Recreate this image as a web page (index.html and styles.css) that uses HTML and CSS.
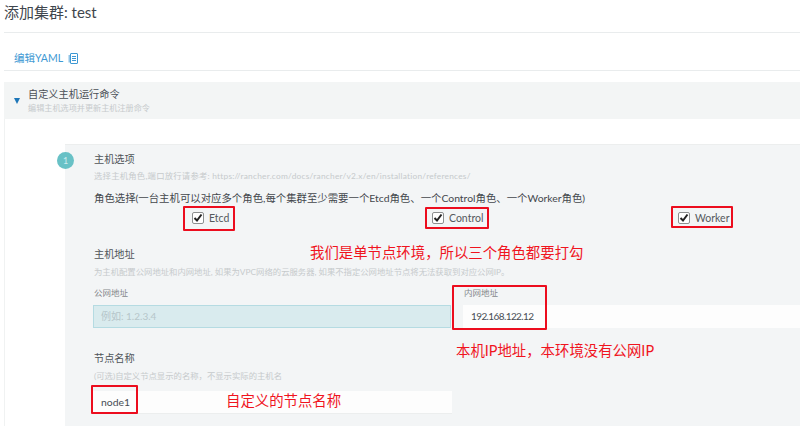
FILE: index.html
```html
<!DOCTYPE html>
<html lang="zh-CN">
<head>
    <meta charset="UTF-8">
    <title>添加集群: test</title>
    <link rel="stylesheet" href="styles.css">
</head>
<body>

    <h1 class="page-title">添加集群: test</h1>

    <div class="yaml-bar">
        <a class="yaml-link">编辑YAML
            <svg class="yaml-icon" width="10" height="11" viewBox="0 0 10 11">
                <rect x="0.5" y="2" width="1.5" height="7.5" fill="#8fc3e6"/>
                <rect x="2.5" y="0.5" width="7" height="10" rx="0.5" fill="none" stroke="#3d98d3"/>
                <path d="M4 3.5h4M4 5.5h4M4 7.5h4" stroke="#3d98d3" stroke-width="1"/>
            </svg>
        </a>
    </div>

    <section class="accordion">
        <div class="accordion-head">
            <span class="caret"></span>
            <div>
                <div class="accordion-title">自定义主机运行命令</div>
                <div class="hint hint-head">编辑主机选项并更新主机注册命令</div>
            </div>
        </div>

        <div class="accordion-body">
            <div class="card">
                <span class="step">1</span>

                <h2 class="card-title">主机选项</h2>
                <p class="hint hint-top">选择主机角色,端口放行请参考: https://rancher.com/docs/rancher/v2.x/en/installation/references/</p>
                <p class="roles-text">角色选择(一台主机可以对应多个角色,每个集群至少需要一个Etcd角色、一个Control角色、一个Worker角色)</p>

                <div class="roles">
                    <label class="role">
                        <span class="check"><svg width="10" height="10" viewBox="0 0 10 10"><path d="M1.5 5l2.5 2.5L8.5 1.5" fill="none" stroke="#222" stroke-width="2"/></svg></span>
                        Etcd
                    </label>
                    <label class="role">
                        <span class="check"><svg width="10" height="10" viewBox="0 0 10 10"><path d="M1.5 5l2.5 2.5L8.5 1.5" fill="none" stroke="#222" stroke-width="2"/></svg></span>
                        Control
                    </label>
                    <label class="role">
                        <span class="check"><svg width="10" height="10" viewBox="0 0 10 10"><path d="M1.5 5l2.5 2.5L8.5 1.5" fill="none" stroke="#222" stroke-width="2"/></svg></span>
                        Worker
                    </label>
                </div>

                <h2 class="card-title title-address">主机地址</h2>
                <p class="hint hint-sub">为主机配置公网地址和内网地址, 如果为VPC网络的云服务器, 如果不指定公网地址节点将无法获取到对应公网IP。</p>

                <div class="address-grid">
                    <div>
                        <div class="field-label">公网地址</div>
                        <div class="field field-public">例如: 1.2.3.4</div>
                    </div>
                    <div>
                        <div class="field-label">内网地址</div>
                        <div class="field field-ip">192.168.122.12</div>
                    </div>
                </div>

                <h2 class="card-title title-node">节点名称</h2>
                <p class="hint hint-sub">(可选)自定义节点显示的名称，不显示实际的主机名</p>
                <div class="field field-node">node1</div>
            </div>
        </div>
    </section>

    <!-- screenshot annotations drawn over the page -->
    <div class="box box-etcd"></div>
    <div class="box box-control"></div>
    <div class="box box-worker"></div>
    <div class="box box-ip"></div>
    <div class="box box-node"></div>
    <div class="note note-roles">我们是单节点环境，所以三个角色都要打勾</div>
    <div class="note note-ip">本机IP地址，本环境没有公网IP</div>
    <div class="note note-node">自定义的节点名称</div>

</body>
</html>
```

FILE: styles.css
```css
body {
    margin: 0;
    width: 800px;
    height: 426px;
    overflow: hidden;
    position: relative;
    background-color: #fff;
    color: #4a4f55;
    font-family: Lato, "Noto Sans CJK SC", sans-serif;
}

h1, h2, p {
    margin: 0;
    font-weight: 400;
}

.page-title {
    margin-left: 4px;
    height: 32px;
    font-size: 15px;
    line-height: 24px;
    color: #3f464d;
    border-bottom: 1px solid #e9eced;
}

.yaml-bar {
    margin-left: 4px;
    padding-left: 10px;
    height: 37px;
    border-bottom: 1px solid #e9eced;
}

.yaml-link {
    display: inline-flex;
    align-items: center;
    gap: 5px;
    margin-top: 18px;
    font-size: 10.5px;
    line-height: 14px;
    color: #3d98d3;
}

.yaml-icon {
    flex: none;
}

.accordion {
    margin: 11px 0 0 4px;
}

.accordion-head {
    display: flex;
    align-items: center;
    gap: 8px;
    height: 37px;
    padding-left: 10px;
    background-color: #f3f5f5;
}

.caret {
    width: 0;
    height: 0;
    border-left: 3.5px solid transparent;
    border-right: 3.5px solid transparent;
    border-top: 6px solid #1d76b8;
}

.accordion-title {
    font-size: 10.2px;
    line-height: 15px;
    color: #4a4f55;
}

.hint {
    font-size: 8.35px;
    line-height: 12px;
    color: #c6cacc;
    white-space: nowrap;
}

.hint-head {
    font-size: 8.15px;
}

.accordion-body {
    padding: 25px 0 0 60px;
    border-left: 1px solid #f0f2f2;
}

.card {
    position: relative;
    height: 282px;
    padding: 6px 0 0 28px;
    background-color: #f3f5f6;
    border-top: 1px solid #eceeee;
    box-sizing: border-box;
}

.step {
    position: absolute;
    left: -8px;
    top: 7px;
    width: 17px;
    height: 17px;
    border-radius: 50%;
    background-color: #68c1c6;
    color: #cfecee;
    font-size: 9px;
    line-height: 17px;
    text-align: center;
}

.card-title {
    font-size: 10.2px;
    line-height: 16px;
    color: #4f5459;
    padding-left: 1px;
}

.hint-top {
    margin-top: 3px;
    padding-left: 1px;
    letter-spacing: 0.23px;
}

.roles-text {
    margin-top: 9px;
    padding-left: 1px;
    font-size: 10.4px;
    line-height: 14px;
    color: #43474c;
    white-space: nowrap;
}

.roles {
    display: grid;
    grid-template-columns: 240px 246px auto;
    height: 18px;
    margin-top: 4px;
    padding-left: 99px;
}

.role {
    display: flex;
    align-items: center;
    gap: 5px;
    font-size: 10.5px;
    color: #55595d;
}

.check {
    display: flex;
    align-items: center;
    justify-content: center;
    width: 10px;
    height: 10px;
    border: 1px solid #8d8f90;
    border-radius: 2px;
    background-color: #fff;
}

.title-address {
    margin-top: 19px;
}

.hint-sub {
    margin-top: 4px;
    padding-left: 1px;
}

.address-grid {
    display: grid;
    grid-template-columns: 358px 1fr;
    column-gap: 12px;
    margin-top: 9px;
}

.field-label {
    font-size: 8.5px;
    line-height: 12px;
    color: #85898c;
    padding-left: 1px;
    margin-bottom: 6px;
}

.field {
    height: 23px;
    box-sizing: border-box;
    padding-left: 8px;
    font-size: 10px;
    line-height: 23px;
    color: #474c54;
    background-color: #fdfdfd;
}

.field-public {
    padding-left: 7px;
    line-height: 21px;
    color: #b6c6ca;
    background-color: #d9ebee;
    border: 1px solid #b5dbe2;
}

.field-ip {
    letter-spacing: -0.6px;
}

.title-node {
    margin-top: 22px;
}

.field-node {
    width: 359px;
    margin-top: 9px;
    font-size: 10.4px;
    border-bottom: 1px solid #eceeee;
}

/* annotations */
.box {
    position: absolute;
    box-sizing: border-box;
    border: 2.5px solid #ec0d1e;
    border-radius: 1px;
}

.box-etcd {
    left: 183px;
    top: 206px;
    width: 52px;
    height: 25px;
}

.box-control {
    left: 425px;
    top: 207px;
    width: 64px;
    height: 22px;
}

.box-worker {
    left: 671px;
    top: 206px;
    width: 62px;
    height: 22px;
}

.box-ip {
    left: 452px;
    top: 285px;
    width: 95px;
    height: 45px;
}

.box-node {
    left: 91px;
    top: 385px;
    width: 47px;
    height: 29px;
}

.note {
    position: absolute;
    font-size: 14.4px;
    line-height: 20px;
    color: #f0141e;
    white-space: nowrap;
}

.note-roles {
    left: 310px;
    top: 243px;
}

.note-ip {
    left: 456px;
    top: 341px;
}

.note-node {
    left: 226px;
    top: 391px;
}
```
